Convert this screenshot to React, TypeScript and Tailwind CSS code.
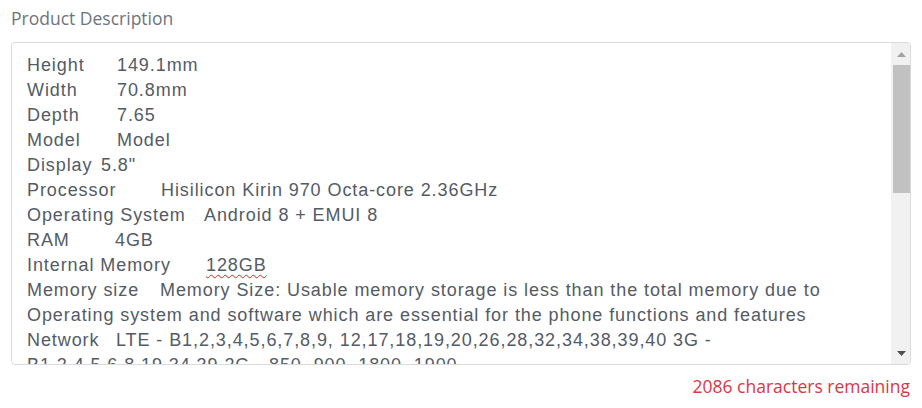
const specs: [string, string, number][] = [
  ["Height", "149.1mm", 90],
  ["Width", "70.8mm", 90],
  ["Depth", "7.65", 90],
  ["Model", "Model", 90],
  ["Display", "5.8\"", 74],
  ["Processor", "Hisilicon Kirin 970 Octa-core 2.36GHz", 134],
  ["Operating System", "Android 8 + EMUI 8", 177],
  ["RAM", "4GB", 88],
];

const more = [
  "B1,2,4,5,6,8,19,34,39 2G - 850, 900, 1800, 1900",
  "Rear Camera   Dual 20MP + 12MP with Leica lenses",
  "Front Camera   24MP",
  "Battery   3400mAh",
  "Weight   180g",
  "Colour   Midnight Blue",
  "SIM   Dual SIM (Nano-SIM, dual stand-by)",
  "Connectivity   Wi-Fi 802.11 a/b/g/n/ac, Bluetooth 4.2, NFC, USB Type-C",
  "Sensors   Fingerprint, accelerometer, gyro, proximity, compass",
  "Water resistance   IP67 dust/water resistant",
  "Charging   Fast charging 22.5W",
];

const App = () => {
  return (
    <div className="w-[922px] h-[408px] bg-white px-[11px] pt-[6px]">
      <label className="block text-[17.5px] leading-6 text-[#6c757d] font-['Open_Sans','Noto_Sans',sans-serif]">
        Product Description
      </label>
      <div className="mt-[12px] w-[900px] h-[323px] border border-[#d9dcdf] rounded-[4px] flex overflow-hidden">
        <div className="flex-1 overflow-hidden pl-[15px] pr-[10px] pt-[10px] text-[18px] leading-[25px] tracking-[0.92px] text-[#545b66] font-['Liberation_Sans','Arial',sans-serif]">
          {specs.map(([k, v, w]) => (
            <div key={k}>
              <span className="inline-block" style={{ width: w }}>{k}</span>
              {v}
            </div>
          ))}
          <div>
            <span className="inline-block w-[179px]">Internal Memory</span>
            <span className="underline decoration-wavy decoration-[#e02020] decoration-1 underline-offset-[3px]">128GB</span>
          </div>
          <div>
            <span className="inline-block w-[133px]">Memory size</span>
            Memory Size: Usable memory storage is less than the total memory due to Operating system and software which are essential for the phone functions and features
          </div>
          <div>
            <span className="inline-block w-[89px]">Network</span>
            LTE - B1,2,3,4,5,6,7,8,9, 12,17,18,19,20,26,28,32,34,38,39,40 3G -
          </div>
          {more.map((l) => (
            <div key={l} className="whitespace-pre">{l}</div>
          ))}
        </div>
        {/* scrollbar */}
        <div className="w-[19px] shrink-0 bg-[#f1f1f1] flex flex-col">
          <div className="h-[22px] flex items-center justify-center pl-[2px]">
            <svg width="9" height="5" viewBox="0 0 9 5"><path d="M0 5 L4.5 0 L9 5 Z" fill="#a3a3a3" /></svg>
          </div>
          <div className="h-[128px] ml-[2px] bg-[#c1c1c1]" />
          <div className="flex-1" />
          <div className="h-[22px] flex items-center justify-center pl-[2px]">
            <svg width="9" height="5" viewBox="0 0 9 5"><path d="M0 0 L9 0 L4.5 5 Z" fill="#505050" /></svg>
          </div>
        </div>
      </div>
      <p className="mt-[9px] text-right pr-[1px] text-[17.5px] leading-6 text-[#dc3545] font-['Open_Sans','Noto_Sans',sans-serif]">
        2086 characters remaining
      </p>
    </div>
  );
};

export default App;
